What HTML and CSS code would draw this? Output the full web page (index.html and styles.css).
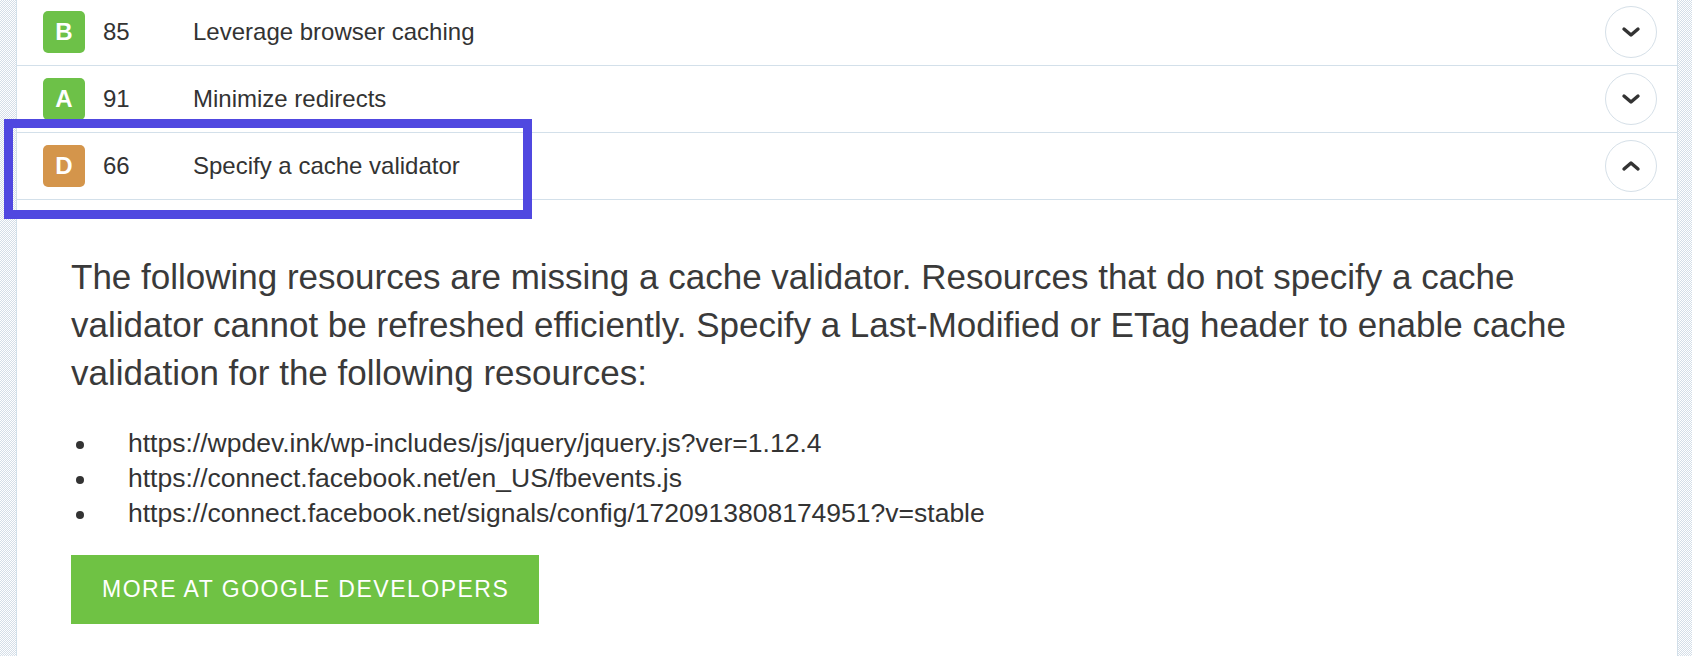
FILE: index.html
```html
<!DOCTYPE html>
<html lang="en">
<head>
<meta charset="utf-8">
<title>Page speed recommendations</title>
<link rel="stylesheet" href="styles.css">
</head>
<body>
<div class="panel">
  <div class="row">
    <span class="badge badge-green">B</span>
    <span class="score">85</span>
    <span class="title">Leverage browser caching</span>
    <span class="toggle"><svg viewBox="0 0 20 12" class="chev"><path d="M3 3 L10 9 L17 3"/></svg></span>
  </div>
  <div class="row">
    <span class="badge badge-green">A</span>
    <span class="score">91</span>
    <span class="title">Minimize redirects</span>
    <span class="toggle"><svg viewBox="0 0 20 12" class="chev"><path d="M3 3 L10 9 L17 3"/></svg></span>
  </div>
  <div class="row row-open">
    <span class="badge badge-orange">D</span>
    <span class="score">66</span>
    <span class="title">Specify a cache validator</span>
    <span class="toggle"><svg viewBox="0 0 20 12" class="chev"><path d="M3 9 L10 3 L17 9"/></svg></span>
    <span class="highlight"></span>
  </div>
  <div class="detail">
    <p class="desc">The following resources are missing a cache validator. Resources that do not specify a cache validator cannot be refreshed efficiently. Specify a Last-Modified or ETag header to enable cache validation for the following resources:</p>
    <ul class="resources">
      <li>https://wpdev.ink/wp-includes/js/jquery/jquery.js?ver=1.12.4</li>
      <li>https://connect.facebook.net/en_US/fbevents.js</li>
      <li>https://connect.facebook.net/signals/config/1720913808174951?v=stable</li>
    </ul>
    <a class="more" href="#">MORE AT GOOGLE DEVELOPERS</a>
  </div>
</div>
</body>
</html>
```
FILE: styles.css
```css
html, body {
  margin: 0;
  padding: 0;
}
body {
  height: 656px;
  overflow: hidden;
  background: repeating-conic-gradient(#d4dee8 0 25%, #ffffff 0 50%) 0 0 / 2px 2px;
  font-family: "Liberation Sans", Arial, sans-serif;
  color: #333333;
}
.panel {
  margin: -1px 14px 0 16px;
  background: #ffffff;
  border-left: 1px solid #d3e0ea;
  border-right: 1px solid #d3e0ea;
  min-height: 700px;
}
.row {
  position: relative;
  display: flex;
  align-items: center;
  height: 66px;
  border-bottom: 1px solid #d3e0ea;
  padding-left: 26px;
  padding-right: 20px;
}
.badge {
  flex: none;
  width: 42px;
  height: 42px;
  border-radius: 5px;
  color: #ffffff;
  font-weight: bold;
  font-size: 24px;
  display: flex;
  align-items: center;
  justify-content: center;
}
.badge-green { background: #6dc148; }
.badge-orange { background: #d4954b; }
.score {
  margin-left: 18px;
  width: 90px;
  font-size: 24px;
}
.title {
  font-size: 24px;
}
.toggle {
  margin-left: auto;
  width: 50px;
  height: 50px;
  border: 1px solid #d6e0e8;
  border-radius: 50%;
  display: flex;
  align-items: center;
  justify-content: center;
}
.chev {
  width: 20px;
  height: 12px;
  fill: none;
  stroke: #333333;
  stroke-width: 3.4;
  stroke-linecap: round;
  stroke-linejoin: round;
}
.highlight {
  position: absolute;
  left: -13px;
  top: -14px;
  width: 510px;
  height: 82px;
  border: 9px solid #5048e0;
  pointer-events: none;
}
.detail {
  padding: 53px 54px 0 54px;
}
.desc {
  margin: 0;
  font-size: 35px;
  line-height: 48px;
  color: #3a3a3a;
}
.resources {
  margin: 29px 0 0 0;
  padding: 0;
  list-style: none;
  font-size: 26.5px;
  line-height: 35px;
  color: #333333;
}
.resources li::before {
  content: "";
  display: inline-block;
  width: 8px;
  height: 8px;
  border-radius: 50%;
  background: #333333;
  margin: 0 44px 0 5px;
  vertical-align: middle;
}
.more {
  display: inline-block;
  margin-top: 24px;
  padding: 0 30px 0 31px;
  height: 69px;
  line-height: 69px;
  background: #6fc244;
  color: #ffffff;
  font-size: 23px;
  letter-spacing: 1.5px;
  text-decoration: none;
}
```
